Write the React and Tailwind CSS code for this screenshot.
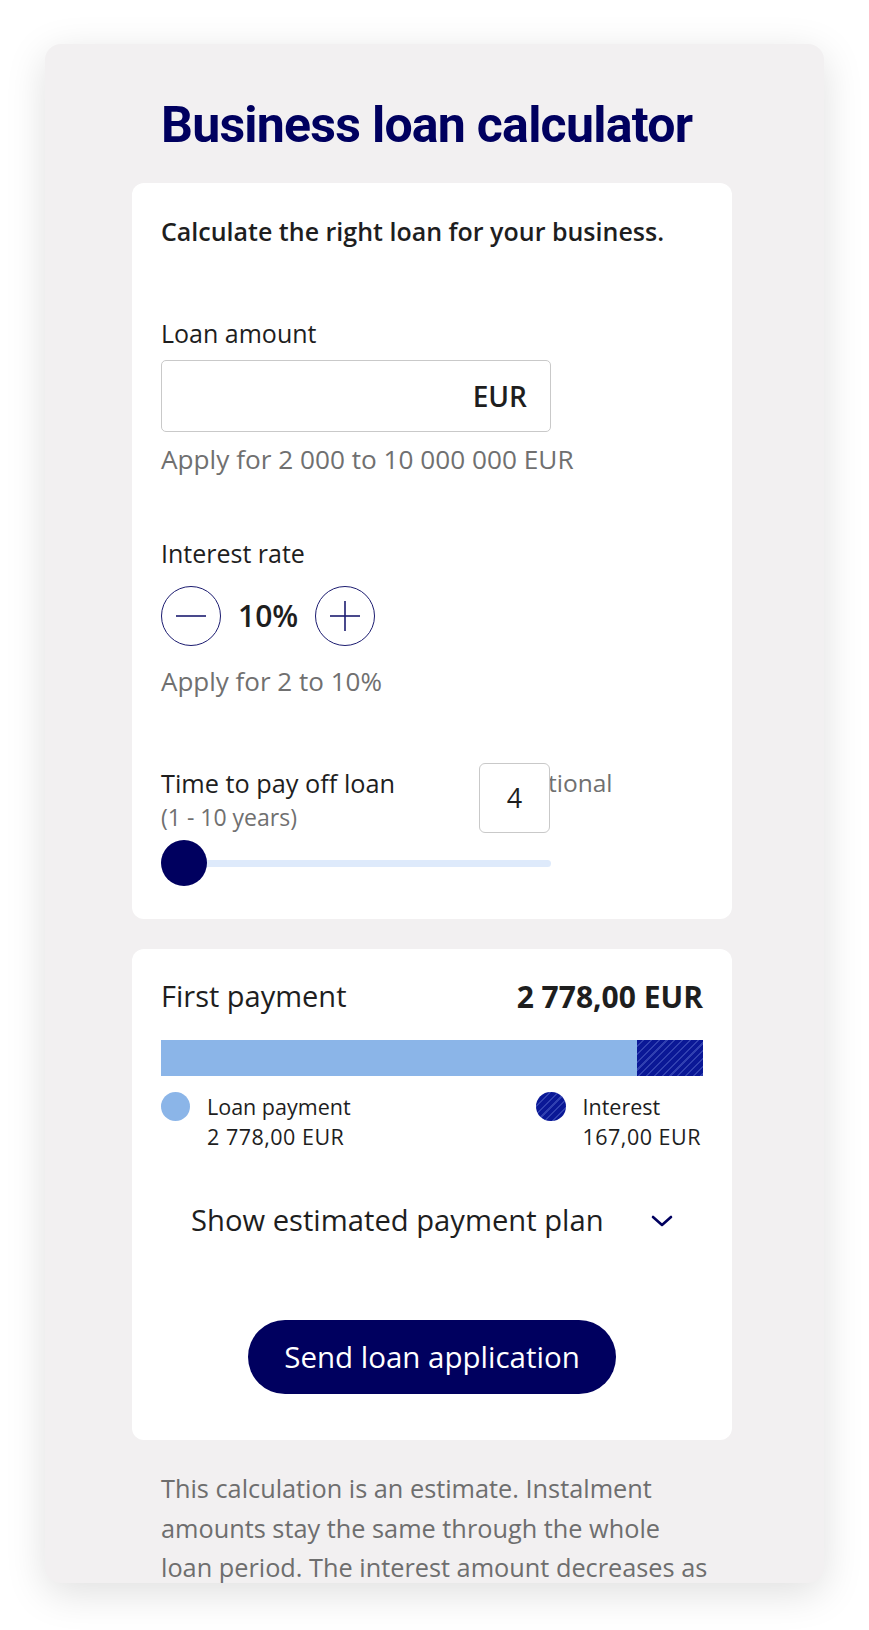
import { useState } from 'react'

const HATCH = 'bg-[repeating-linear-gradient(135deg,#0a1896_0px,#0a1896_4px,#3040b0_4px,#3040b0_5.5px)]'

function RoundButton({ plus, onClick }) {
  return (
    <button
      onClick={onClick}
      className="w-[60px] h-[60px] rounded-full border-[1.5px] border-[#1c1c70] flex items-center justify-center bg-white"
    >
      <svg width="32" height="32" viewBox="0 0 32 32" fill="none" stroke="#1c1c70" strokeWidth="1.6">
        <line x1="1" y1="16" x2="31" y2="16" />
        {plus && <line x1="16" y1="1" x2="16" y2="31" />}
      </svg>
    </button>
  )
}

export default function App() {
  const [rate, setRate] = useState(10)
  const [years, setYears] = useState(4)

  return (
    <div className="w-[869px] h-[1630px] bg-white pt-[44px] px-[45px] font-['Open_Sans',sans-serif] text-[#1e1e1e]">
      <div className="w-[779px] h-[1539px] rounded-2xl overflow-hidden bg-[#f2f0f1] shadow-[0_10px_40px_rgba(0,0,0,0.13)] pl-[87px] pt-[56px]">
        <div className="w-[600px]">
          <h1 className="pl-[29px] font-['Roboto',sans-serif] font-bold text-[50px] leading-[50px] tracking-[-0.75px] text-[#00005f]">
            Business loan calculator
          </h1>

          <div className="mt-[33px] bg-white rounded-xl px-[29px] pt-[32px] pb-[33px]">
            <p className="text-[25px] leading-[32px] font-semibold">
              Calculate the right loan for your business.
            </p>

            <label className="block mt-[70px] text-[25px] leading-[32px]">Loan amount</label>
            <div className="mt-[11px] w-[390px] h-[72px] border border-[#c9c9c9] rounded-[5px] flex items-center justify-end pr-[23px]">
              <span className="text-[28px] font-semibold">EUR</span>
            </div>
            <p className="mt-[11px] text-[26.2px] leading-[32px] text-[#707070]">Apply for 2 000 to 10 000 000 EUR</p>

            <label className="block mt-[62px] text-[25px] leading-[32px]">Interest rate</label>
            <div className="mt-[17px] flex items-center">
              <RoundButton onClick={() => setRate(r => Math.max(2, r - 1))} />
              <span className="mx-[17px] text-[30px] font-semibold leading-none">{rate}%</span>
              <RoundButton plus onClick={() => setRate(r => Math.min(10, r + 1))} />
            </div>
            <p className="mt-[19px] text-[26px] leading-[32px] text-[#707070]">Apply for 2 to 10%</p>

            <div className="relative mt-[70px] w-[390px]">
              <label className="block text-[25.3px] leading-[32px]">Time to pay off loan</label>
              <span className="absolute left-[353px] top-0 text-[24.5px] leading-[32px] text-[#707070]">Optional</span>
              <div className="absolute left-[318px] top-[-4px] w-[71px] h-[70px] bg-white border border-[#c9c9c9] rounded-[6px] flex items-center justify-center text-[27px]">
                {years}
              </div>
              <p className="mt-[4px] text-[23px] leading-[28px] text-[#707070]">(1 - 10 years)</p>
              <div className="mt-[9px] h-[46px] flex items-center relative">
                <div className="w-full h-[7px] rounded-full bg-[#deeafb]" />
                <button
                  onClick={() => setYears(y => (y % 10) + 1)}
                  className="absolute left-0 top-0 w-[46px] h-[46px] rounded-full bg-[#00005f]"
                />
              </div>
            </div>
          </div>

          <div className="mt-[30px] bg-white rounded-xl px-[29px] pt-[29px] pb-[46px]">
            <div className="flex items-center justify-between h-[36px]">
              <span className="text-[29px]">First payment</span>
              <span className="text-[30px] font-bold">2 778,00 EUR</span>
            </div>

            <div className="mt-[26px] h-[36px] flex">
              <div className="flex-1 bg-[#8bb5e8]" />
              <div className={`w-[66px] ${HATCH}`} />
            </div>

            <div className="mt-[16px] pr-[2px] flex justify-between text-[21.5px] leading-[30px]">
              <div className="flex items-start gap-[17px]">
                <span className="w-[29px] h-[29px] rounded-full bg-[#8bb5e8]" />
                <div>
                  <div>Loan payment</div>
                  <div className="tracking-[0.5px]">2 778,00 EUR</div>
                </div>
              </div>
              <div className="flex items-start gap-[16px]">
                <span className={`w-[30px] h-[29px] rounded-full ${HATCH}`} />
                <div>
                  <div>Interest</div>
                  <div className="tracking-[0.5px]">167,00 EUR</div>
                </div>
              </div>
            </div>

            <button className="mt-[51px] w-full px-[30px] h-[36px] flex items-center justify-between">
              <span className="text-[29.2px]">Show estimated payment plan</span>
              <svg width="22" height="12" viewBox="0 0 22 12" fill="none" stroke="#00005f" strokeWidth="2.6" strokeLinecap="round" strokeLinejoin="round">
                <polyline points="2,2 11,10 20,2" />
              </svg>
            </button>

            <div className="mt-[81px] flex justify-center">
              <button className="w-[368px] h-[74px] rounded-full bg-[#00005f] text-white text-[29.5px] font-medium">
                Send loan application
              </button>
            </div>
          </div>

          <p className="mt-[29px] ml-[29px] w-[548px] text-[25.3px] leading-[39.5px] text-[#6e6e6e]">
            This calculation is an estimate. Instalment amounts stay the same through the whole loan period. The interest amount decreases as the loan is paid back.
          </p>
        </div>
      </div>
    </div>
  )
}
